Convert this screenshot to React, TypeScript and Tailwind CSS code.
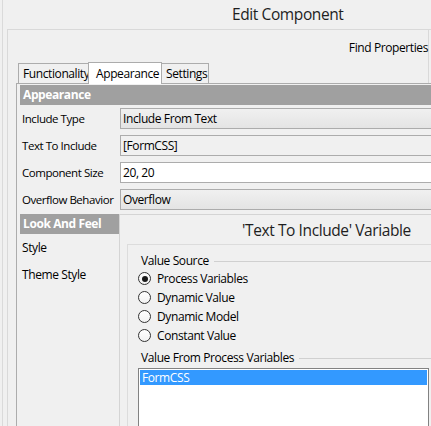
import React from 'react';

const rows = [
  { label: 'Include Type', value: 'Include From Text', kind: 'combo' },
  { label: 'Text To Include', value: '[FormCSS]', kind: 'readonly' },
  { label: 'Component Size', value: '20, 20', kind: 'text' },
  { label: 'Overflow Behavior', value: 'Overflow', kind: 'combo' },
];

const sources = ['Process Variables', 'Dynamic Value', 'Dynamic Model', 'Constant Value'];

function Field({ value, kind }: { value: string; kind: string }) {
  const bg =
    kind === 'combo'
      ? 'bg-gradient-to-b from-[#f0f0f0] to-[#e4e4e4]'
      : kind === 'readonly'
        ? 'bg-[#f0f0f0]'
        : 'bg-white';
  return (
    <div className={`flex-1 h-[21px] border border-[#acacac] ${bg} flex items-center pl-[2px]`}>
      {value}
    </div>
  );
}

function Radio({ checked }: { checked?: boolean }) {
  return (
    <div className="w-[13px] h-[13px] rounded-full border border-[#333333] bg-gradient-to-b from-[#ffffff] to-[#f2f2f2] flex items-center justify-center">
      {checked && <div className="w-[6px] h-[6px] rounded-full bg-[#1a1a1a]" />}
    </div>
  );
}

function GroupLabel({ text }: { text: string }) {
  return (
    <div className="flex items-center h-[16px]">
      <span>{text}</span>
      <div className="flex-1 h-px bg-[#d0d0d0] ml-[5px]" />
    </div>
  );
}

export default function App() {
  return (
    <div className="w-[431px] h-[426px] overflow-hidden bg-[#f0f0f0] pl-[2px] font-['Open_Sans',sans-serif] text-[12px] tracking-[-0.4px] leading-[16px] text-black">
      <div className="h-full border-l border-[#dadada]">
        {/* Title */}
        <div className="h-[29px] pl-[229px] pt-[4px] text-[15.5px] tracking-[-0.4px] leading-[20px] text-[#1e1e1e] whitespace-nowrap">
          Edit Component
        </div>

        {/* Panel */}
        <div className="ml-[4px] border-t border-l border-[#d9d9d9] pl-[8px]">
          <div className="w-[413px] border-r border-[#d9d9d9]">
            <div className="h-[32px] flex items-center justify-end pt-[3px] whitespace-nowrap">Find Properties</div>
            <div className="flex items-end h-[21px] ml-[2px]">
              <div className="h-[20px] w-[71px] border border-b-0 border-[#acacac] flex items-center pl-[4px] pt-[1px] whitespace-nowrap">
                Functionality
              </div>
              <div className="relative h-[22px] w-[74px] -ml-px -mb-px border border-b-0 border-[#acacac] bg-white flex items-center pl-[7px] whitespace-nowrap">
                Appearance
              </div>
              <div className="h-[20px] w-[48px] -ml-px border border-b-0 border-[#acacac] flex items-center pl-[4px] pt-[1px] whitespace-nowrap">
                Settings
              </div>
            </div>
          </div>

          {/* Content box */}
          <div className="w-[520px] h-[360px] border-t border-l border-[#acacac] pl-[3px] pt-[1px]">
            <div className="h-[20px] bg-[#a0a0a0] text-white font-bold flex items-center pl-[3px]">Appearance</div>
            {rows.map((r) => (
              <div key={r.label} className="flex items-center h-[27px]">
                <div className="w-[100px] pl-[2px] text-[11.5px] tracking-[-0.45px] whitespace-nowrap">{r.label}</div>
                <Field value={r.value} kind={r.kind} />
              </div>
            ))}

            <div className="flex mt-[1px]">
              <div className="w-[99px]">
                <div className="h-[20px] bg-[#a0a0a0] text-white font-bold flex items-center pl-[3px] whitespace-nowrap">
                  Look And Feel
                </div>
                <div className="h-[27px] flex items-center pl-[2px]">Style</div>
                <div className="h-[27px] flex items-center pl-[2px]">Theme Style</div>
              </div>

              <div className="flex-1 h-[230px] border-t border-l border-[#d4d4d4]">
                <div className="h-[29px] pl-[122px] flex items-center text-[15.5px] tracking-[-0.4px] text-[#1e1e1e] whitespace-nowrap">
                  'Text To Include' Variable
                </div>
                <div className="ml-[7px] h-[200px] border-t border-l border-[#dcdcdc] pl-[13px] pt-[8px]">
                  <GroupLabel text="Value Source" />
                  <div className="-ml-[3px]">
                    {sources.map((s, i) => (
                      <div key={s} className="h-[19px] flex items-center">
                        <Radio checked={i === 0} />
                        <span className="ml-[6px] whitespace-nowrap">{s}</span>
                      </div>
                    ))}
                  </div>
                  <div className="mt-[5px]">
                    <GroupLabel text="Value From Process Variables" />
                  </div>
                  <div className="-ml-[3px] mt-[2px] w-[291px] h-[80px] border border-[#828282] bg-white p-px">
                    <div className="h-[15px] bg-[#3399ff] text-white flex items-center pl-[2px]">FormCSS</div>
                  </div>
                </div>
              </div>
            </div>
          </div>
        </div>
      </div>
    </div>
  );
}
